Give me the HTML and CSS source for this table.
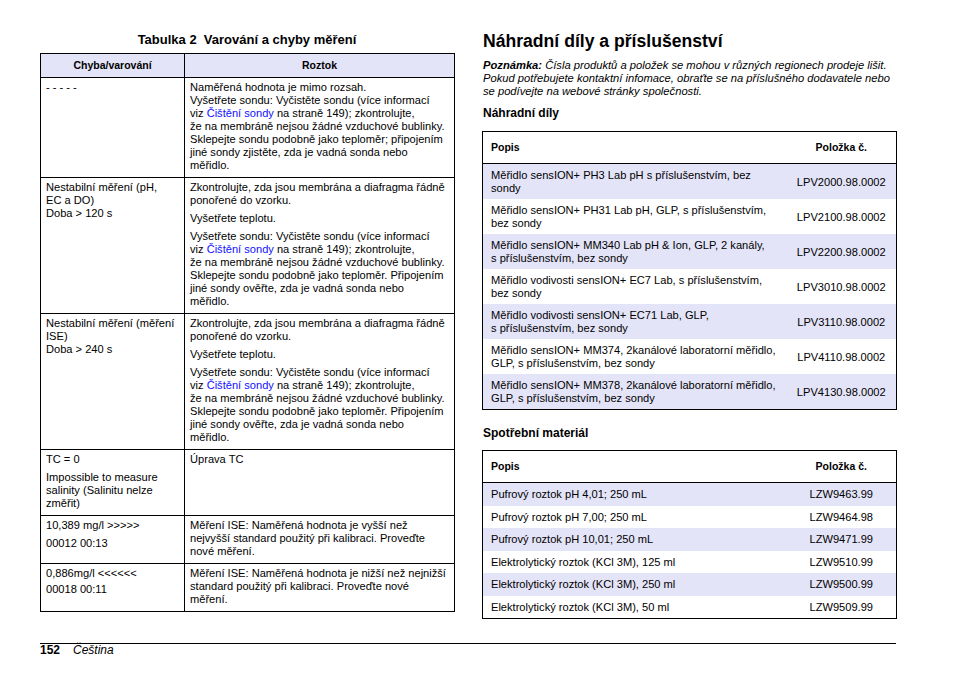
FILE: index.html
```html
<!DOCTYPE html>
<html lang="cs">
<head>
<meta charset="utf-8">
<title>Náhradní díly a příslušenství</title>
<link rel="stylesheet" href="styles.css">
</head>
<body>
<div class="page">
  <div class="main">
    <section class="col col-left">
      <div class="caption">Tabulka 2&nbsp; Varování a chyby měření</div>
      <table class="err">
        <colgroup><col class="c1"><col class="c2"></colgroup>
        <thead>
          <tr><th>Chyba/varování</th><th>Roztok</th></tr>
        </thead>
        <tbody>
          <tr>
            <td><p>- - - - -</p></td>
            <td><p>Naměřená hodnota je mimo rozsah.<br>Vyšetřete sondu: Vyčistěte sondu (více informací<br>viz <a class="lnk">Čištění sondy</a> na straně 149); zkontrolujte,<br>že na membráně nejsou žádné vzduchové bublinky.<br>Sklepejte sondu podobně jako teploměr; připojením<br>jiné sondy zjistěte, zda je vadná sonda nebo<br>měřidlo.</p></td>
          </tr>
          <tr>
            <td><p>Nestabilní měření (pH,<br>EC a DO)<br>Doba &gt; 120 s</p></td>
            <td><p>Zkontrolujte, zda jsou membrána a diafragma řádně<br>ponořené do vzorku.</p><p>Vyšetřete teplotu.</p><p>Vyšetřete sondu: Vyčistěte sondu (více informací<br>viz <a class="lnk">Čištění sondy</a> na straně 149); zkontrolujte,<br>že na membráně nejsou žádné vzduchové bublinky.<br>Sklepejte sondu podobně jako teploměr. Připojením<br>jiné sondy ověřte, zda je vadná sonda nebo<br>měřidlo.</p></td>
          </tr>
          <tr>
            <td><p>Nestabilní měření (měření<br>ISE)<br>Doba &gt; 240 s</p></td>
            <td><p>Zkontrolujte, zda jsou membrána a diafragma řádně<br>ponořené do vzorku.</p><p>Vyšetřete teplotu.</p><p>Vyšetřete sondu: Vyčistěte sondu (více informací<br>viz <a class="lnk">Čištění sondy</a> na straně 149); zkontrolujte,<br>že na membráně nejsou žádné vzduchové bublinky.<br>Sklepejte sondu podobně jako teploměr. Připojením<br>jiné sondy ověřte, zda je vadná sonda nebo<br>měřidlo.</p></td>
          </tr>
          <tr>
            <td><p>TC = 0</p><p>Impossible to measure<br>salinity (Salinitu nelze<br>změřit)</p></td>
            <td><p>Úprava TC</p></td>
          </tr>
          <tr>
            <td><p>10,389 mg/l &gt;&gt;&gt;&gt;&gt;</p><p>00012 00:13</p></td>
            <td><p>Měření ISE: Naměřená hodnota je vyšší než<br>nejvyšší standard použitý při kalibraci. Proveďte<br>nové měření.</p></td>
          </tr>
          <tr>
            <td><p>0,886mg/l &lt;&lt;&lt;&lt;&lt;&lt;</p><p class="tight">00018 00:11</p></td>
            <td><p>Měření ISE: Naměřená hodnota je nižší než nejnižší<br>standard použitý při kalibraci. Proveďte nové<br>měření.</p></td>
          </tr>
        </tbody>
      </table>
    </section>

    <section class="col col-right">
      <h1 class="title">Náhradní díly a příslušenství</h1>
      <p class="note"><b>Poznámka:</b> Čísla produktů a položek se mohou v různých regionech prodeje lišit.<br>Pokud potřebujete kontaktní infomace, obraťte se na příslušného dodavatele nebo<br>se podívejte na webové stránky společnosti.</p>

      <h2 class="sub">Náhradní díly</h2>
      <table class="parts">
        <colgroup><col class="d"><col class="n"></colgroup>
        <thead>
          <tr><th class="hd">Popis</th><th class="hn">Položka č.</th></tr>
        </thead>
        <tbody>
          <tr><td>Měřidlo sensION+ PH3 Lab pH s příslušenstvím, bez<br>sondy</td><td class="num">LPV2000.98.0002</td></tr>
          <tr><td>Měřidlo sensION+ PH31 Lab pH, GLP, s příslušenstvím,<br>bez sondy</td><td class="num">LPV2100.98.0002</td></tr>
          <tr><td>Měřidlo sensION+ MM340 Lab pH &amp; Ion, GLP, 2 kanály,<br>s příslušenstvím, bez sondy</td><td class="num">LPV2200.98.0002</td></tr>
          <tr><td>Měřidlo vodivosti sensION+ EC7 Lab, s příslušenstvím,<br>bez sondy</td><td class="num">LPV3010.98.0002</td></tr>
          <tr><td>Měřidlo vodivosti sensION+ EC71 Lab, GLP,<br>s příslušenstvím, bez sondy</td><td class="num">LPV3110.98.0002</td></tr>
          <tr><td>Měřidlo sensION+ MM374, 2kanálové laboratorní měřidlo,<br>GLP, s příslušenstvím, bez sondy</td><td class="num">LPV4110.98.0002</td></tr>
          <tr><td>Měřidlo sensION+ MM378, 2kanálové laboratorní měřidlo,<br>GLP, s příslušenstvím, bez sondy</td><td class="num">LPV4130.98.0002</td></tr>
        </tbody>
      </table>

      <h2 class="sub sub2">Spotřební materiál</h2>
      <table class="parts cons">
        <colgroup><col class="d"><col class="n"></colgroup>
        <thead>
          <tr><th class="hd">Popis</th><th class="hn">Položka č.</th></tr>
        </thead>
        <tbody>
          <tr><td>Pufrový roztok pH 4,01; 250 mL</td><td class="num">LZW9463.99</td></tr>
          <tr><td>Pufrový roztok pH 7,00; 250 mL</td><td class="num">LZW9464.98</td></tr>
          <tr><td>Pufrový roztok pH 10,01; 250 mL</td><td class="num">LZW9471.99</td></tr>
          <tr><td>Elektrolytický roztok (KCl 3M), 125 ml</td><td class="num">LZW9510.99</td></tr>
          <tr><td>Elektrolytický roztok (KCl 3M), 250 ml</td><td class="num">LZW9500.99</td></tr>
          <tr><td>Elektrolytický roztok (KCl 3M), 50 ml</td><td class="num">LZW9509.99</td></tr>
        </tbody>
      </table>
    </section>
  </div>

  <footer class="foot">
    <span class="pg">152</span><span class="lang">Čeština</span>
  </footer>
</div>
</body>
</html>
```

FILE: styles.css
```css
* { box-sizing: border-box; }
html, body { margin: 0; padding: 0; background: #fff; }
body {
  font-family: "Liberation Sans", Arial, sans-serif;
  color: #000;
  font-size: 11.1px;
  line-height: 13px;
}
.page {
  width: 954px;
  height: 673px;
  padding: 31px 58px 16px 40px;
  display: flex;
  flex-direction: column;
}
.main {
  display: flex;
  gap: 28px;
  align-items: flex-start;
}
.col { width: 414px; flex: none; }

/* Left table */
.caption {
  margin-top: 2px;
  font-size: 13px;
  font-weight: bold;
  text-align: center;
  line-height: 14px;
  margin-bottom: 6px;
}
.err {
  width: 414px;
  border-collapse: collapse;
  table-layout: fixed;
}
.err col.c1 { width: 144px; }
.err col.c2 { width: 270px; }
.err th, .err td {
  border: 1px solid #000;
  vertical-align: top;
  text-align: left;
  white-space: nowrap;
}
.err th {
  background: #e4e4f8;
  font-weight: bold;
  font-size: 10.5px;
  text-align: center;
  height: 24px;
  padding: 0;
  vertical-align: middle;
}
.err td { padding: 3px 5px 5px 5px; }
.err p { margin: 0 0 5px 0; }
.err p:last-child { margin-bottom: 0; }
.err p.tight { margin-top: -2px; }
.lnk { color: #1010ff; text-decoration: none; }

/* Right column */
.title {
  margin: 0 0 8px 1px;
  font-size: 17.6px;
  line-height: 20px;
  font-weight: bold;
}
.note {
  margin: 0 0 8px 1px;
  font-style: italic;
  font-size: 11.2px;
  line-height: 13px;
}
.sub {
  margin: 0 0 11px 1px;
  font-size: 12px;
  line-height: 14px;
  font-weight: bold;
}
.sub2 { margin-top: 16px; margin-bottom: 10px; }

.parts {
  width: 414px;
  border-collapse: collapse;
  table-layout: fixed;
  border: 1px solid #000;
}
.parts col.d { width: 304px; }
.parts col.n { width: 110px; }
.parts th {
  height: 32px;
  font-size: 10.5px;
  font-weight: bold;
  border-bottom: 1px solid #000;
  padding: 0 8px;
  vertical-align: middle;
}
.parts th.hd { text-align: left; }
.parts th.hn { text-align: center; }
.parts td {
  padding: 5px 8px 4px 8px;
  white-space: nowrap;
  vertical-align: middle;
}
.parts td.num { text-align: center; padding-left: 0; padding-right: 0; }
.parts tbody tr:nth-child(odd) td { background: #e4e4f8; }
.cons td { padding: 5px 8px 4.5px 8px; }

/* Footer */
.foot {
  margin-top: auto;
  border-top: 1px solid #000;
  font-size: 12px;
  line-height: 13px;
}
.pg { font-weight: bold; margin-right: 13px; }
.lang { font-style: italic; }
```
